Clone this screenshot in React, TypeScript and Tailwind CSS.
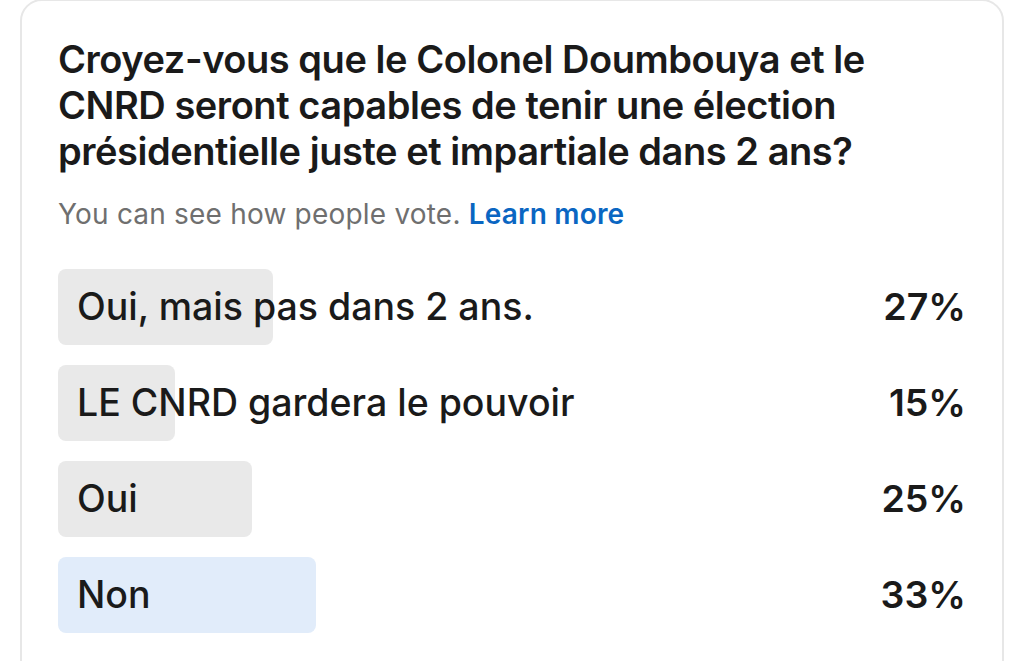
import React from "react";

const options = [
  { label: "Oui, mais pas dans 2 ans.", pct: "27%", w: 215, color: "bg-[#e9e9e9]" },
  { label: "LE CNRD gardera le pouvoir", pct: "15%", w: 117, color: "bg-[#e9e9e9]" },
  { label: "Oui", pct: "25%", w: 194, color: "bg-[#e9e9e9]" },
  { label: "Non", pct: "33%", w: 258, color: "bg-[#e1ecfa]" },
];

export default function App() {
  return (
    <div className="w-[1024px] h-[661px] overflow-hidden bg-white" style={{ fontFamily: "Inter, 'Noto Sans', sans-serif" }}>
      <div className="ml-[20px] w-[984px] h-[700px] rounded-[22px] border-2 border-[#e7e7e7] pl-[36px] pr-[36px] pt-[35px] -mt-[1px]">
        <h1 className="text-[38px] leading-[46px] font-semibold text-[#1a1a1a] tracking-[-0.45px]">
          Croyez-vous que le Colonel Doumbouya et le CNRD seront capables de tenir une élection présidentielle juste et impartiale dans 2 ans?
        </h1>
        <p className="mt-[24px] text-[28px] leading-[32px] text-[#6f6f6f] tracking-[0.2px]">
          You can see how people vote. <span className="text-[#0a66c2] font-semibold">Learn more</span>
        </p>
        <div className="mt-[39px] flex flex-col gap-[20px]">
          {options.map((o) => (
            <div key={o.label} className="relative h-[76px] flex items-center justify-between">
              <div className={`absolute left-0 top-0 h-full rounded-[8px] ${o.color}`} style={{ width: o.w }} />
              <span className="relative pl-[19px] text-[37.5px] font-medium text-[#1a1a1a]">{o.label}</span>
              <span className="relative text-[37.5px] font-semibold text-[#1a1a1a]">{o.pct}</span>
            </div>
          ))}
        </div>
      </div>
    </div>
  );
}
